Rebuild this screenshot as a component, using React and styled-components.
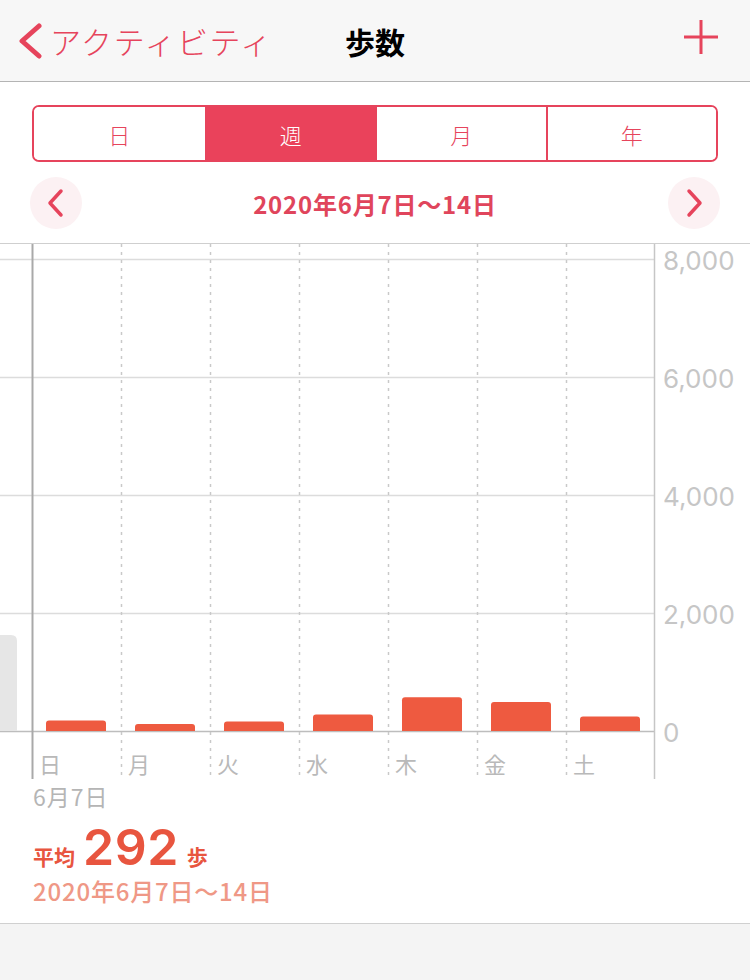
import React from 'react';
import styled, { createGlobalStyle } from 'styled-components';

const RED = '#e6445c';
const BAR = '#ee5a40';
const JP = '"Noto Sans CJK JP", "Noto Sans", sans-serif';

const GlobalStyle = createGlobalStyle`
  html, body {
    margin: 0;
    padding: 0;
    background: #f4f4f4;
  }
  body {
    font-family: ${JP};
  }
`;

const Page = styled.div`
  width: 750px;
  height: 980px;
  overflow: hidden;
  background: #f4f4f4;
`;

const NavBar = styled.header`
  height: 81px;
  border-bottom: 1px solid #b4b4b4;
  background: #f7f7f7;
  display: grid;
  grid-template-columns: 1fr auto 1fr;
  align-items: center;
  padding: 0 16px;
`;

const BackLink = styled.a`
  display: flex;
  align-items: center;
  gap: 6px;
  color: ${RED};
  font-size: 31px;
  font-weight: 300;
  text-decoration: none;
  letter-spacing: 1.6px;
  white-space: nowrap;
`;

const Title = styled.h1`
  margin: 0;
  font-size: 30px;
  font-weight: 700;
  color: #000;
`;

const AddButton = styled.button`
  justify-self: end;
  border: none;
  background: none;
  padding: 0;
  margin-right: 14px;
  margin-top: -8px;
  display: flex;
`;

const Content = styled.main`
  background: #fff;
  border-bottom: 1px solid #d0d0d0;
`;

const Segmented = styled.div`
  margin: 0 32px;
  height: 53px;
  border: 2px solid ${RED};
  border-radius: 7px;
  display: grid;
  grid-template-columns: repeat(4, 1fr);
  overflow: hidden;
`;

const Segment = styled.div`
  display: flex;
  align-items: center;
  justify-content: center;
  font-size: 22px;
  font-weight: 300;
  color: ${({ $active }) => ($active ? '#fff' : RED)};
  background: ${({ $active }) => ($active ? '#ea425b' : '#fff')};
  & + & {
    border-left: 2px solid ${RED};
  }
`;

const Wrap = styled.div`
  padding-top: 23px;
`;

const DateRow = styled.div`
  margin-top: 15px;
  padding: 0 30px;
  height: 52px;
  display: flex;
  align-items: center;
  justify-content: space-between;
`;

const RoundButton = styled.button`
  width: 52px;
  height: 52px;
  border-radius: 50%;
  border: none;
  background: #fcf1f3;
  display: flex;
  align-items: center;
  justify-content: center;
  padding: 0;
`;

const RangeText = styled.div`
  font-size: 24px;
  font-weight: 700;
  color: #e0455c;
  letter-spacing: 0.8px;
`;

const ChartArea = styled.section`
  margin-top: 14px;
  border-top: 1px solid #cfcfcf;
`;

const ChartSvg = styled.svg`
  display: block;
`;

const StartLabel = styled.div`
  padding-left: 33px;
  margin-top: -3px;
  font-size: 23px;
  color: #b5b5b5;
  line-height: 36px;
  letter-spacing: 1px;
`;

const Summary = styled.div`
  padding: 8px 33px 17px;
`;

const AvgLine = styled.div`
  display: flex;
  align-items: baseline;
  gap: 8px;
  color: #e8553f;
  line-height: 50px;
`;

const AvgLabel = styled.span`
  font-size: 21px;
  font-weight: 700;
`;

const AvgValue = styled.span`
  font-family: Inter, "Noto Sans", sans-serif;
  font-size: 50px;
  font-weight: 600;
  letter-spacing: 0.5px;
`;

const RangeSub = styled.div`
  margin-top: -5px;
  font-size: 24px;
  font-weight: 500;
  color: #ef9886;
  line-height: 30px;
  letter-spacing: 0.8px;
`;

const days = ['日', '月', '火', '水', '木', '金', '土'];
const steps = [180, 120, 160, 280, 570, 490, 244];
const ticks = [8000, 6000, 4000, 2000, 0];

const BASE = 487;
const TOP = 15;
const COL = 89;
const LEFT = 32;
const RIGHT = 654;
const scale = (BASE - TOP) / 8000;

const barPath = (x, w, h, r = 3) => {
  const rr = Math.min(r, h);
  const y = BASE - h;
  return `M${x} ${BASE} V${y + rr} Q${x} ${y} ${x + rr} ${y} H${x + w - rr} Q${x + w} ${y} ${x + w} ${y + rr} V${BASE} Z`;
};

const Chart = () => (
  <ChartSvg width="750" height="537" viewBox="0 0 750 537">
    {ticks.map((t) => {
      const y = BASE - t * scale;
      return (
        <g key={t}>
          <line x1="0" x2={RIGHT} y1={y + 0.5} y2={y + 0.5} stroke={t === 0 ? '#bdbdbd' : '#dcdcdc'} strokeWidth="1.5" />
          <text x="663" y={y + 11} fontSize="26" fill="#c6c6c6" fontFamily='Inter, "Noto Sans", sans-serif'>
            {t === 0 ? '0' : t.toLocaleString('en-US')}
          </text>
        </g>
      );
    })}
    <path d={barPath(-6, 23, 96, 6)} fill="#e6e6e6" />
    {days.slice(1).map((d, i) => (
      <line key={d} x1={LEFT + COL * (i + 1) + 0.5} x2={LEFT + COL * (i + 1) + 0.5} y1="0" y2="535" stroke="#c9c9c9" strokeWidth="1.5" strokeDasharray="3 5" />
    ))}
    <line x1={LEFT + 0.5} x2={LEFT + 0.5} y1="0" y2="535" stroke="#a9a9a9" strokeWidth="2" />
    <line x1={RIGHT + 0.5} x2={RIGHT + 0.5} y1="0" y2="535" stroke="#c6c6c6" strokeWidth="1.5" />
    {steps.map((s, i) => (
      <path key={i} d={barPath(LEFT + COL * i + 14, 60, s * scale)} fill={BAR} />
    ))}
    {days.map((d, i) => (
      <text key={d} x={LEFT + COL * i + 7} y="529" fontSize="22" fill="#b9b9b9" fontFamily={JP}>
        {d}
      </text>
    ))}
  </ChartSvg>
);

export default function App() {
  return (
    <Page>
      <GlobalStyle />
      <NavBar>
        <BackLink href="#">
          <svg width="28" height="36" viewBox="0 0 28 36">
            <path d="M23 3 L6 18 L23 33" fill="none" stroke={RED} strokeWidth="5" strokeLinecap="round" strokeLinejoin="round" />
          </svg>
          アクティビティ
        </BackLink>
        <Title>歩数</Title>
        <AddButton aria-label="追加">
          <svg width="38" height="38" viewBox="0 0 38 38">
            <path d="M19 2 V36 M2 19 H36" stroke={RED} strokeWidth="3" />
          </svg>
        </AddButton>
      </NavBar>
      <Content>
        <Wrap>
          <Segmented>
            <Segment>日</Segment>
            <Segment $active>週</Segment>
            <Segment>月</Segment>
            <Segment>年</Segment>
          </Segmented>
          <DateRow>
            <RoundButton aria-label="前へ">
              <svg width="20" height="30" viewBox="0 0 20 30">
                <path d="M15 3 L4 15 L15 27" fill="none" stroke={RED} strokeWidth="3.5" strokeLinecap="round" strokeLinejoin="round" />
              </svg>
            </RoundButton>
            <RangeText>2020年6月7日〜14日</RangeText>
            <RoundButton aria-label="次へ">
              <svg width="20" height="30" viewBox="0 0 20 30">
                <path d="M5 3 L16 15 L5 27" fill="none" stroke={RED} strokeWidth="3.5" strokeLinecap="round" strokeLinejoin="round" />
              </svg>
            </RoundButton>
          </DateRow>
        </Wrap>
        <ChartArea>
          <Chart />
          <StartLabel>6月7日</StartLabel>
        </ChartArea>
        <Summary>
          <AvgLine>
            <AvgLabel>平均</AvgLabel>
            <AvgValue>292</AvgValue>
            <AvgLabel>歩</AvgLabel>
          </AvgLine>
          <RangeSub>2020年6月7日〜14日</RangeSub>
        </Summary>
      </Content>
    </Page>
  );
}
